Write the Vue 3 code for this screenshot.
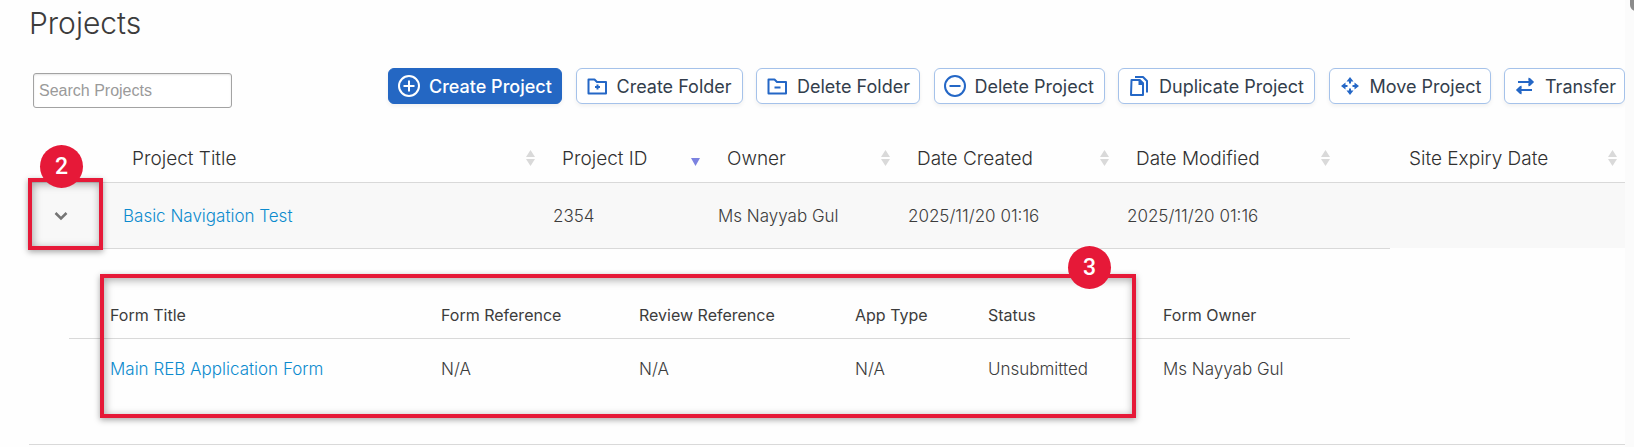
<template>
  <main class="page">
    <h1>Projects</h1>

    <div class="toolbar">
      <input
        v-model="search"
        class="search"
        type="text"
        placeholder="Search Projects"
        aria-label="Search Projects"
      />
      <div class="actions">
        <button
          v-for="action in actions"
          :key="action.label"
          type="button"
          :class="['action', { primary: action.primary }]"
        >
          <svg viewBox="0 0 24 24" aria-hidden="true">
            <path v-if="action.line" class="line" :d="action.line" />
            <path v-if="action.fill" class="fill" :d="action.fill" />
          </svg>
          <span>{{ action.label }}</span>
        </button>
      </div>
    </div>

    <table class="projects">
      <colgroup>
        <col class="c-toggle" />
        <col />
        <col class="c-id" />
        <col class="c-owner" />
        <col class="c-created" />
        <col class="c-modified" />
        <col class="c-spacer" />
        <col class="c-expiry" />
      </colgroup>
      <thead>
        <tr>
          <th></th>
          <th v-for="column in columns" :key="column.name">
            <button
              v-if="column.name"
              type="button"
              class="sort"
              @click="sortBy = column.name"
            >
              {{ column.name }}
              <svg viewBox="0 0 9 16" aria-hidden="true">
                <template v-if="sortBy !== column.name">
                  <path class="idle" d="M4.5 0L9 7H0z" />
                  <path class="idle" d="M0 9h9l-4.500 7z" />
                </template>
                <path v-else class="active" d="M0 8h9l-4.500 8z" />
              </svg>
            </button>
          </th>
        </tr>
      </thead>
      <tbody>
        <tr class="project">
          <td class="toggle-cell">
            <button
              type="button"
              class="toggle"
              aria-label="Toggle forms"
              :aria-expanded="open"
              @click="open = !open"
            >
              <svg viewBox="0 0 16 16" aria-hidden="true">
                <path d="M2.500 5l5.500 5.500L13.500 5" />
              </svg>
            </button>
            <div class="mark mark-toggle"><span class="badge">2</span></div>
          </td>
          <td><a href="#">Basic Navigation Test</a></td>
          <td>2354</td>
          <td>Ms Nayyab Gul</td>
          <td>2025/11/20 01:16</td>
          <td>2025/11/20 01:16</td>
          <td></td>
          <td></td>
        </tr>
        <tr v-if="open">
          <td class="details" colspan="8">
            <table class="forms">
              <colgroup>
                <col class="f-edge" />
                <col />
                <col class="f-reference" />
                <col class="f-review" />
                <col class="f-type" />
                <col class="f-status" />
                <col class="f-owner" />
              </colgroup>
              <thead>
                <tr>
                  <th></th>
                  <th v-for="name in formColumns" :key="name">{{ name }}</th>
                </tr>
              </thead>
              <tbody>
                <tr>
                  <td></td>
                  <td><a href="#">Main REB Application Form</a></td>
                  <td>N/A</td>
                  <td>N/A</td>
                  <td>N/A</td>
                  <td>Unsubmitted</td>
                  <td>Ms Nayyab Gul</td>
                </tr>
              </tbody>
            </table>
            <div class="mark mark-forms"><span class="badge">3</span></div>
          </td>
        </tr>
      </tbody>
    </table>

    <div class="track"><div class="thumb"></div></div>
  </main>
</template>

<script setup>
import { ref } from 'vue'

const search = ref('')
const open = ref(true)
const sortBy = ref('Project ID')

const folder = 'M3.500 5.500h6l2.500 2.500h9v11.500h-17.500z'

const actions = [
  {
    label: 'Create Project',
    primary: true,
    line: 'M12 2a10 10 0 1 0 0 20a10 10 0 1 0 0-20M12 6.500v11M6.500 12h11',
  },
  {
    label: 'Create Folder',
    line: folder + 'M12.500 10.500v5M10 13h5',
  },
  {
    label: 'Delete Folder',
    line: folder + 'M9.500 13.500h6',
  },
  {
    label: 'Delete Project',
    line: 'M12 2a10 10 0 1 0 0 20a10 10 0 1 0 0-20M6.500 12h11',
  },
  {
    label: 'Duplicate Project',
    line: 'M4.500 6h8l3.500 3.500v11.500h-12zM8 3h8l4 4v11.500',
    fill: 'M11.500 5.500h2l3 3v2.500h-5z',
  },
  {
    label: 'Move Project',
    line: 'M12 6v3.500M12 14.500v3.500M6 12h3.500M14.500 12h3.500',
    fill: 'M12 3l3.500 4.500h-7zM12 21l3.500-4.500h-7zM3 12l4.500-3.500v7zM21 12l-4.500-3.500v7z',
  },
  {
    label: 'Transfer',
    line: 'M5 8h14M16 4.500l3.500 3.500-3.500 3.500M19 16H5M8 12.500L4.500 16l3.500 3.500',
    fill: 'M15.500 3.500l5.500 4.500-5.500 4.500zM8.500 11.500L3 16l5.500 4.500z',
  },
]

const columns = [
  { name: 'Project Title' },
  { name: 'Project ID' },
  { name: 'Owner' },
  { name: 'Date Created' },
  { name: 'Date Modified' },
  { name: '' },
  { name: 'Site Expiry Date' },
]

const formColumns = [
  'Form Title',
  'Form Reference',
  'Review Reference',
  'App Type',
  'Status',
  'Form Owner',
]
</script>

<style>
body {
  background: #fefefe;
}
</style>

<style scoped>
.page {
  position: relative;
  box-sizing: border-box;
  padding: 4px 9px 2px 29px;
  color: #3c3c3c;
  font-family: Inter, "Open Sans", sans-serif;
  font-size: 17px;
  font-weight: 300;
}

h1 {
  margin: 0;
  font-size: 30px;
  font-weight: 300;
  line-height: 38px;
}

button {
  font-family: inherit;
  cursor: pointer;
}

a {
  color: #0c8bce;
  text-decoration: none;
}

/* Toolbar */
.toolbar {
  display: flex;
  align-items: flex-start;
  justify-content: space-between;
  margin-top: 26px;
}

.search {
  box-sizing: border-box;
  width: 199px;
  height: 35px;
  margin: 5px 0 0 4px;
  padding: 0 5px;
  border: 1px solid #a3a3a3;
  border-radius: 3px;
  background: #fff;
  box-shadow: inset 0 1px 2px #e4e4e4;
  font-family: "Liberation Sans", Arial, sans-serif;
  font-size: 16px;
}

.search::placeholder {
  color: #9a9a9a;
}

.actions {
  display: grid;
  grid-template-columns: 174px 167px 164px 171px 197px 162px 121px;
  justify-content: space-between;
  width: 1237px;
}

.action {
  display: flex;
  align-items: center;
  gap: 8px;
  height: 36px;
  padding: 0 8px;
  border: 1px solid #a5c2ea;
  border-radius: 6px;
  background: #fff;
  box-shadow: 0 2px 4px rgba(0, 0, 0, 0.06);
  color: #333e4c;
  font-size: 18px;
  font-weight: 400;
  white-space: nowrap;
}

.action svg {
  flex: none;
  width: 24px;
  height: 24px;
}

.action .line {
  fill: none;
  stroke: #2467c6;
  stroke-width: 2;
  stroke-linejoin: round;
}

.action .fill {
  fill: #2467c6;
}

.action.primary {
  border-color: #2467c3;
  background: #2467c3;
  color: #fff;
  font-weight: 500;
}

.action.primary .line {
  stroke: #fff;
}

/* Tables */
table {
  width: 100%;
  border-collapse: separate;
  border-spacing: 0;
  table-layout: fixed;
}

th,
td {
  box-sizing: border-box;
  padding: 0 0 0 10px;
  text-align: left;
  font-weight: 300;
  white-space: nowrap;
}

.projects {
  margin-top: 26px;
}

.projects > thead th {
  height: 49px;
  border-bottom: 1px solid #d9d9d9;
}

.c-toggle {
  width: 84px;
}

.c-id {
  width: 165px;
}

.c-owner {
  width: 190px;
}

.c-created {
  width: 219px;
}

.c-modified {
  width: 221px;
}

.c-spacer {
  width: 52px;
}

.c-expiry {
  width: 235px;
}

.sort {
  display: flex;
  align-items: center;
  justify-content: space-between;
  width: 100%;
  padding: 0 8px 0 9px;
  border: 0;
  background: none;
  color: #303030;
  font-size: 19px;
  font-weight: 300;
}

.sort svg {
  width: 9px;
  height: 16px;
}

.sort .idle {
  fill: #d9d9d9;
}

.sort .active {
  fill: #7b82e0;
}

.project td {
  height: 66px;
  border-bottom: 1px solid #d9d9d9;
  background: #f8f8f8;
}

.project td:last-child {
  border-bottom-color: #fefefe;
}

.project .toggle-cell {
  position: relative;
  padding: 0;
}

.toggle {
  display: flex;
  margin-left: 24px;
  padding: 0;
  border: 0;
  background: none;
}

.toggle svg {
  width: 16px;
  height: 16px;
  fill: none;
  stroke: #757575;
  stroke-width: 2.5;
}

/* Expanded forms */
.details {
  position: relative;
  padding: 43px 275px 46px 40px;
  border-bottom: 1px solid #d9d9d9;
}

.forms th {
  height: 47px;
  border-bottom: 1px solid #d9d9d9;
  font-size: 16px;
  font-weight: 400;
}

.forms td {
  height: 59px;
}

.f-edge {
  width: 31px;
}

.f-reference {
  width: 198px;
}

.f-review {
  width: 216px;
}

.f-type {
  width: 133px;
}

.f-status {
  width: 175px;
}

.f-owner {
  width: 197px;
}

/* Numbered callouts */
.mark {
  position: absolute;
  box-sizing: border-box;
  border: 4px solid #e61938;
  box-shadow: 0 2px 6px rgba(0, 0, 0, 0.35), inset 1px 2px 8px rgba(0, 0, 0, 0.35);
  pointer-events: none;
}

.mark-toggle {
  top: -5px;
  right: 10px;
  bottom: -2px;
  left: -1px;
}

.mark-forms {
  top: 25px;
  right: 489px;
  bottom: 26px;
  left: 71px;
}

.badge {
  position: absolute;
  top: -37px;
  left: 8px;
  display: flex;
  align-items: center;
  justify-content: center;
  width: 43px;
  height: 43px;
  border-radius: 50%;
  background: #e61938;
  color: #fff;
  font-family: Roboto, sans-serif;
  font-size: 23px;
  font-weight: 500;
}

.mark-forms .badge {
  top: -32px;
  right: 21px;
  left: auto;
}

/* Page scrollbar */
.track {
  position: absolute;
  top: 0;
  right: 0;
  bottom: 0;
  width: 9px;
  overflow: hidden;
  background: #fbfbfb;
}

.thumb {
  width: 12px;
  height: 11px;
  margin-left: 5px;
  border-radius: 0 0 0 6px;
  background: #8b8b8b;
}
</style>
